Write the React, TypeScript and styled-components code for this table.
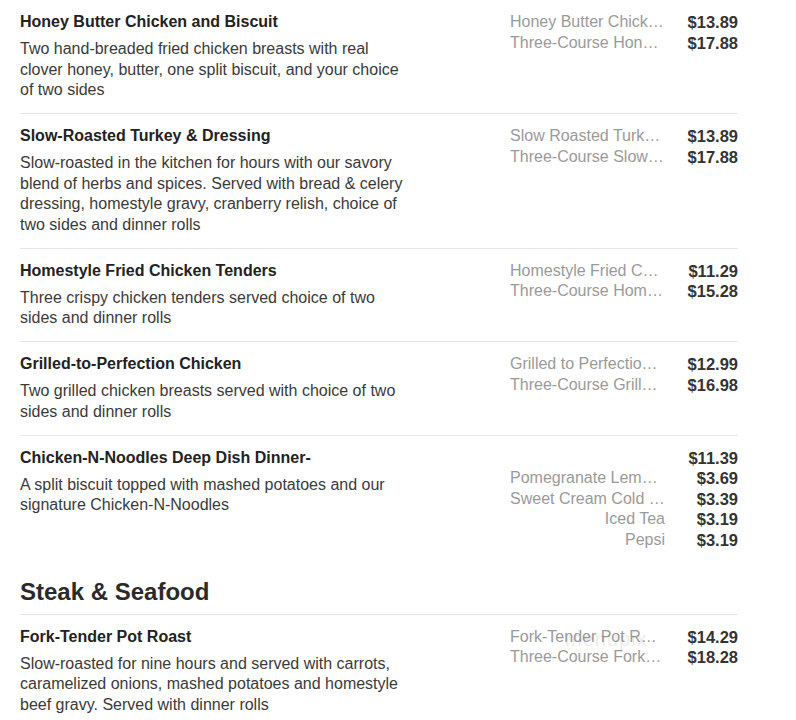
import React from "react";
import styled, { createGlobalStyle } from "styled-components";

const Global = createGlobalStyle`
  html, body { margin: 0; padding: 0; background: #fff; }
  body { font-family: "Liberation Sans", Arial, sans-serif; }
`;

const Page = styled.div`
  width: 718px;
  padding: 0 0 0 20px;
`;

const Row = styled.div<{ $last?: boolean }>`
  display: flex;
  justify-content: space-between;
  padding: 12px 0 12.5px;
  border-bottom: ${(p) => (p.$last ? "none" : "1px solid #e6e6e6")};
  position: relative;
`;

const Info = styled.div`
  width: 390px;
`;

const Title = styled.div`
  font-size: 16px;
  font-weight: bold;
  line-height: 20px;
  color: #222;
  margin-bottom: 7px;
`;

const Desc = styled.div`
  font-size: 16px;
  line-height: 20.5px;
  color: #3a3a3a;
`;

const Prices = styled.div`
  width: 228px;
  display: grid;
  grid-template-columns: 155px 1fr;
  align-content: start;
  line-height: 20.5px;
`;

const OptName = styled.div`
  font-size: 16px;
  color: #9a9a9a;
  text-align: right;
  white-space: nowrap;
  overflow: hidden;
  text-overflow: ellipsis;
`;

const Price = styled.div`
  font-size: 16.5px;
  font-weight: bold;
  color: #333;
  text-align: right;
`;

const Heading = styled.h2`
  margin: 0;
  padding: 16px 0 9px;
  font-size: 24px;
  line-height: 26px;
  font-weight: bold;
  color: #2a2a2a;
  border-bottom: 1px solid #e6e6e6;
`;

const Watermark = styled.div`
  position: absolute;
  left: 545px;
  top: 13px;
  font-size: 20px;
  color: #000;
  opacity: 0.07;
  letter-spacing: 1px;
  pointer-events: none;
`;

type Item = {
  title: string;
  desc: string;
  options: [string, string][];
  watermark?: boolean;
};

const chicken: Item[] = [
  {
    title: "Honey Butter Chicken and Biscuit",
    desc: "Two hand-breaded fried chicken breasts with real clover honey, butter, one split biscuit, and your choice of two sides",
    options: [
      ["Honey Butter Chicken and Biscuit", "$13.89"],
      ["Three-Course Honey Butter Chicken", "$17.88"],
    ],
  },
  {
    title: "Slow-Roasted Turkey & Dressing",
    desc: "Slow-roasted in the kitchen for hours with our savory blend of herbs and spices. Served with bread & celery dressing, homestyle gravy, cranberry relish, choice of two sides and dinner rolls",
    options: [
      ["Slow Roasted Turkey & Dressing", "$13.89"],
      ["Three-Course Slow-Roasted Turkey", "$17.88"],
    ],
  },
  {
    title: "Homestyle Fried Chicken Tenders",
    desc: "Three crispy chicken tenders served choice of two sides and dinner rolls",
    options: [
      ["Homestyle Fried Chicken Tenders", "$11.29"],
      ["Three-Course Homestyle Tenders", "$15.28"],
    ],
  },
  {
    title: "Grilled-to-Perfection Chicken",
    desc: "Two grilled chicken breasts served with choice of two sides and dinner rolls",
    options: [
      ["Grilled to Perfection Chicken", "$12.99"],
      ["Three-Course Grilled Chicken", "$16.98"],
    ],
  },
  {
    title: "Chicken-N-Noodles Deep Dish Dinner-",
    desc: "A split biscuit topped with mashed potatoes and our signature Chicken-N-Noodles",
    options: [
      ["", "$11.39"],
      ["Pomegranate Lemonade", "$3.69"],
      ["Sweet Cream Cold Brew", "$3.39"],
      ["Iced Tea", "$3.19"],
      ["Pepsi", "$3.19"],
    ],
  },
];

const steak: Item[] = [
  {
    title: "Fork-Tender Pot Roast",
    desc: "Slow-roasted for nine hours and served with carrots, caramelized onions, mashed potatoes and homestyle beef gravy. Served with dinner rolls",
    options: [
      ["Fork-Tender Pot Roast", "$14.29"],
      ["Three-Course Fork-Tender Pot Roast", "$18.28"],
    ],
    watermark: true,
  },
];

const MenuRow = ({ item, last }: { item: Item; last?: boolean }) => (
  <Row $last={last}>
    <Info>
      <Title>{item.title}</Title>
      <Desc>{item.desc}</Desc>
    </Info>
    <Prices>
      {item.options.map(([n, p], i) => (
        <React.Fragment key={i}>
          <OptName>{n}</OptName>
          <Price>{p}</Price>
        </React.Fragment>
      ))}
    </Prices>
    {item.watermark && <Watermark>menupix</Watermark>}
  </Row>
);

export default function App() {
  return (
    <Page>
      <Global />
      {chicken.map((it, i) => (
        <MenuRow key={it.title} item={it} last={i === chicken.length - 1} />
      ))}
      <Heading>Steak &amp; Seafood</Heading>
      {steak.map((it) => (
        <MenuRow key={it.title} item={it} last />
      ))}
    </Page>
  );
}
